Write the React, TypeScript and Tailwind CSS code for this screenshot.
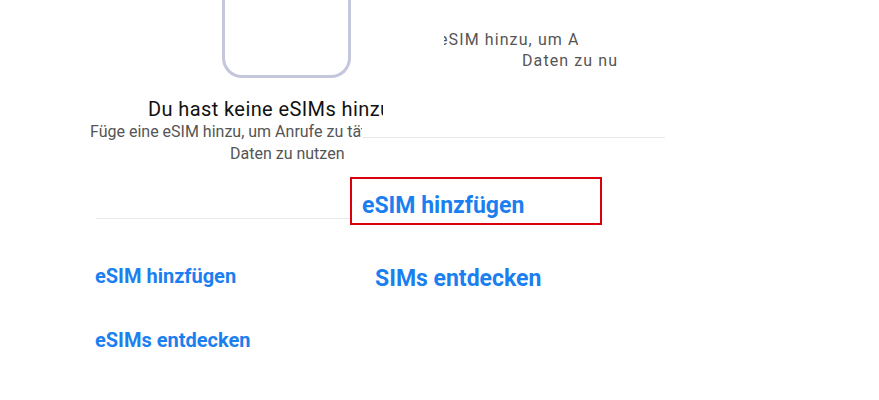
import React from "react";

export default function App() {
  return (
    <div className="w-[879px] h-[400px] bg-white overflow-hidden flex font-['Roboto',sans-serif]">
      {/* left column */}
      <div className="w-[350px] shrink-0 flex flex-col">
        <div className="ml-[222px] w-[129px] h-[78px] border-x-[3px] border-b-[3px] border-[#c4c7dc] rounded-b-[20px]" />
        <div className="mt-[20px] w-[383px] overflow-hidden whitespace-nowrap pl-[148px] text-[20px] leading-[23px] tracking-[0.4px] text-[#111]">
          Du hast keine eSIMs hinzugefügt
        </div>
        <div className="w-[362px] overflow-hidden whitespace-nowrap pl-[90px] text-[16px] leading-[22px] text-[#555]">
          Füge eine eSIM hinzu, um Anrufe zu tätigen und mobile
        </div>
        <div className="whitespace-nowrap pl-[230px] text-[16px] leading-[22px] text-[#555]">
          Daten zu nutzen
        </div>
        <div className="mt-[53px] ml-[96px] w-[254px] h-px bg-[#e8e8e8]" />
        <div className="mt-[45px] pl-[95px] text-[20px] leading-[24px] font-bold text-[#1b7ff0] whitespace-nowrap">
          eSIM hinzfügen
        </div>
        <div className="mt-[40px] pl-[95px] text-[20px] leading-[24px] font-bold text-[#1b7ff0] whitespace-nowrap">
          eSIMs entdecken
        </div>
      </div>

      {/* right column */}
      <div className="flex-1 flex flex-col">
        <div className="mt-[29px] ml-[94px] flex flex-col text-[16px] leading-[21px] tracking-[1.1px] text-[#555] whitespace-nowrap">
          <div className="w-[134px] overflow-hidden">
            <div className="-ml-[5px]">eSIM hinzu, um Anrufe zu tätigen</div>
          </div>
          <div className="w-[173px] overflow-hidden">
            <div className="pl-[78px]">Daten zu nutzen</div>
          </div>
        </div>
        <div className="mt-[66px] ml-[12px] w-[303px] h-px bg-[#e8e8e8]" />
        <div className="mt-[39px] w-[252px] h-[48px] border-2 border-[#d9000d] flex flex-col pl-[10px] pt-[13px]">
          <span className="text-[23px] leading-[28px] font-bold text-[#1b7ff0] whitespace-nowrap">eSIM hinzfügen</span>
        </div>
        <div className="mt-[40px] ml-[25px] text-[23px] leading-[28px] font-bold text-[#1b7ff0] whitespace-nowrap">
          SIMs entdecken
        </div>
      </div>
    </div>
  );
}
